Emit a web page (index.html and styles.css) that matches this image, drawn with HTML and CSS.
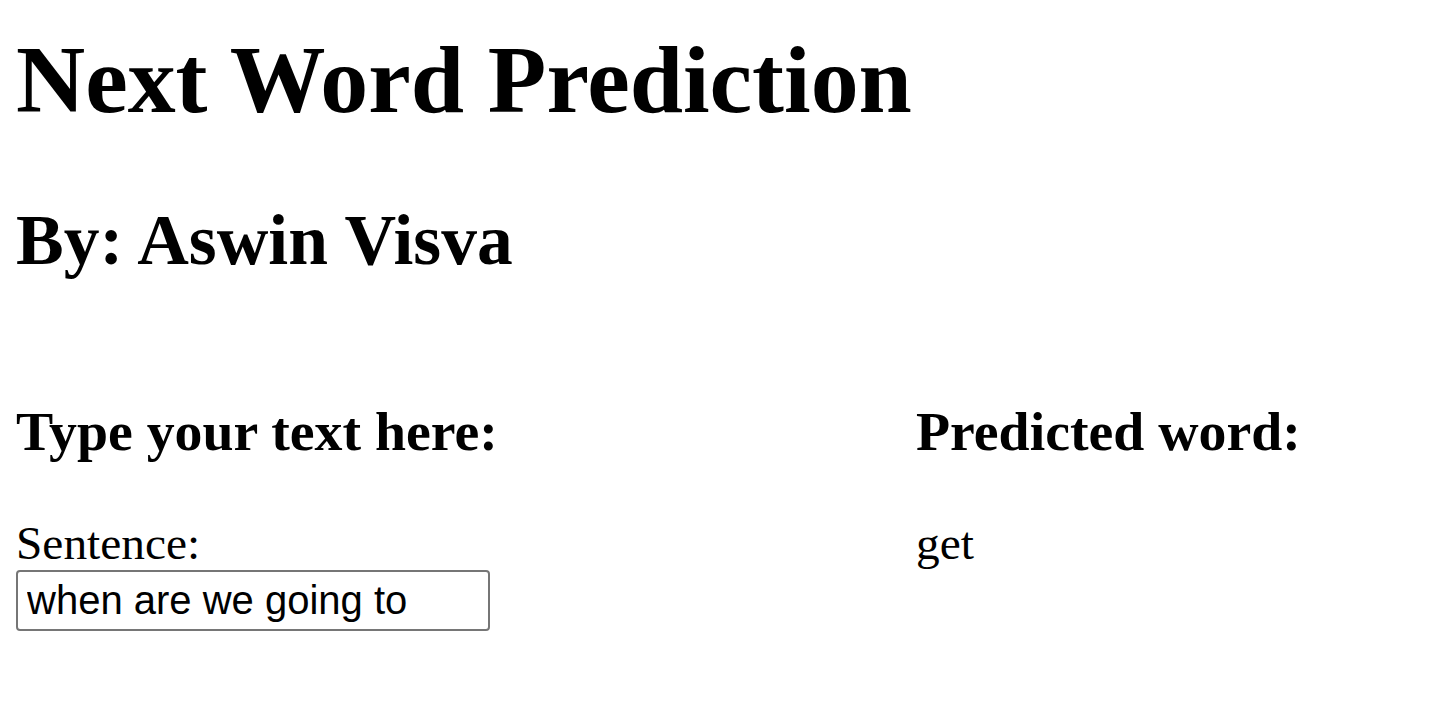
FILE: index.html
```html
<!DOCTYPE html>
<html>
<head>
<meta charset="utf-8">
<title>Next Word Prediction</title>
<link rel="stylesheet" href="styles.css">
</head>
<body>
  <h1 class="title">Next Word Prediction</h1>
  <h2 class="author">By: Aswin Visva</h2>
  <div class="columns">
    <div class="col col-left">
      <h3 class="col-head">Type your text here:</h3>
      <form class="form">
        <label class="label" for="sentence">Sentence:</label>
        <input class="text-input" id="sentence" type="text" value="when are we going to">
      </form>
    </div>
    <div class="col col-right">
      <h3 class="col-head">Predicted word:</h3>
      <p class="prediction">get</p>
    </div>
  </div>
</body>
</html>
```

FILE: styles.css
```css
html, body {
  margin: 0;
  padding: 0;
  background: #ffffff;
}

body {
  padding: 0 16px;
  font-family: "Liberation Serif", "Times New Roman", serif;
  font-size: 47px;
  color: #000000;
  line-height: normal;
}

.title {
  font-size: 95.8px;
  font-weight: bold;
  margin: 25px 0 0 0;
}

.author {
  font-size: 71.5px;
  font-weight: bold;
  margin: 64px 0 0 0;
}

.columns {
  display: flex;
  margin-top: 118px;
}

.col-left {
  width: 900px;
  flex: 0 0 900px;
}

.col-right {
  flex: 1 1 auto;
}

.col-head {
  font-size: 55.8px;
  font-weight: bold;
  margin: 0 0 53px 0;
}

.form {
  margin: 0;
  display: flex;
  flex-direction: column;
  align-items: flex-start;
}

.label {
  font-size: 47.4px;
  display: block;
}

.text-input {
  box-sizing: border-box;
  width: 474px;
  height: 61px;
  margin: 0;
  padding: 0 9px;
  border: 2px solid #767676;
  border-radius: 4px;
  font-family: "Liberation Sans", Arial, sans-serif;
  font-size: 40px;
  color: #000000;
  background: #ffffff;
  outline: none;
}

.prediction {
  margin: 0;
  font-size: 47.4px;
}
```
